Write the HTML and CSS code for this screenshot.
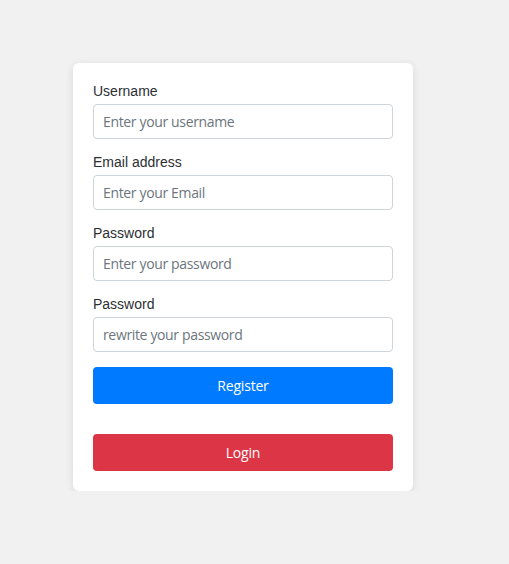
FILE: index.html
```html
<!DOCTYPE html>
<html lang="en">
  <head>
    <meta charset="UTF-8" />
    <meta name="viewport" content="width=device-width, initial-scale=1.0" />
    <title>Register</title>
    <link rel="stylesheet" href="styles.css">
  </head>
  <body>
    <div class="card">
      <form>
        <div class="field">
          <label for="username">Username</label>
          <input type="text" id="username" placeholder="Enter your username" />
        </div>
        <div class="field">
          <label for="email">Email address</label>
          <input type="email" id="email" placeholder="Enter your Email" />
        </div>
        <div class="field">
          <label for="password">Password</label>
          <input type="password" id="password" placeholder="Enter your password" />
        </div>
        <div class="field">
          <label for="password2">Password</label>
          <input type="password" id="password2" placeholder="rewrite your password" />
        </div>
        <button type="submit" class="btn btn-register">Register</button>
        <button type="button" class="btn btn-login">Login</button>
      </form>
    </div>
  </body>
</html>
```

FILE: styles.css
```css
body {
  margin: 0;
  padding: 63px 0 0 73px;
  background: #f1f1f1;
  font-family: "Liberation Sans", Arial, sans-serif;
  color: #212529;
}

.card {
  width: 300px;
  padding: 20px;
  background: #fff;
  border-radius: 6px;
  box-shadow: 0 2px 8px rgba(0, 0, 0, 0.1);
}

.field {
  margin-bottom: 15px;
}

.field label {
  display: block;
  font-size: 14px;
  line-height: 17px;
  margin-bottom: 4px;
  color: #2b2f33;
}

.field input {
  display: block;
  box-sizing: border-box;
  width: 100%;
  height: 35px;
  padding: 6px 9px;
  border: 1px solid #ced4da;
  border-radius: 4px;
  font-family: "Open Sans", sans-serif;
  font-size: 14px;
  letter-spacing: -0.35px;
  color: #495057;
}

.field input::placeholder {
  color: #6c757d;
}

.btn {
  display: block;
  width: 100%;
  height: 37px;
  border: none;
  border-radius: 4px;
  color: #fff;
  font-family: "Open Sans", sans-serif;
  font-size: 14px;
  letter-spacing: -0.2px;
}

.btn-register {
  background: #007bff;
  margin-bottom: 30px;
}

.btn-login {
  background: #dc3545;
}
```
